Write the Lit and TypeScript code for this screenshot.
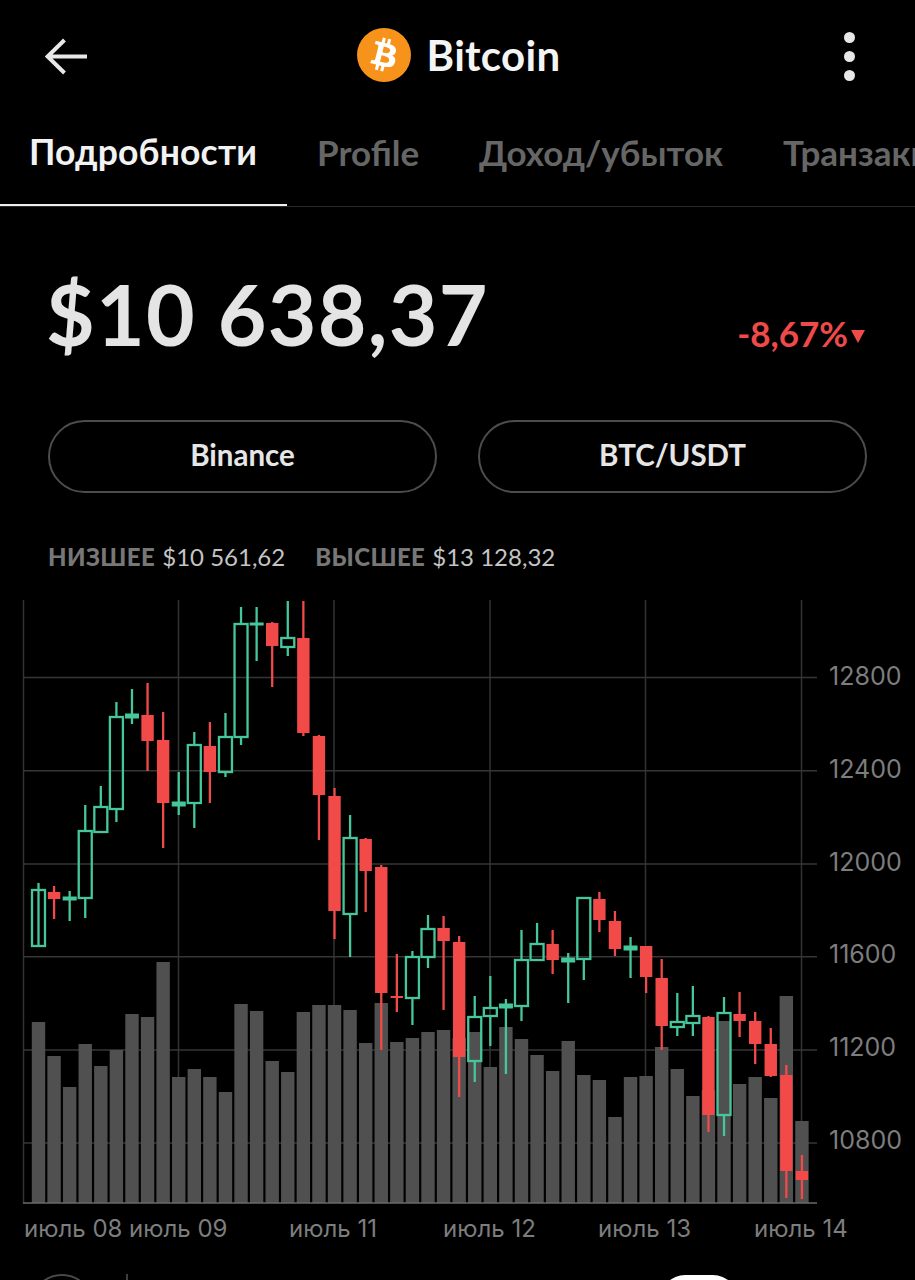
import { LitElement, html, css, svg } from "lit";
import { customElement } from "lit/decorators.js";

// [body-top, body-bottom, wick-top, wick-bottom, up?] in page pixels
const C: [number, number, number, number, number][] = [
  [890,946,883,890,1],[892,899,886,919,0],[897,900,891,921,1],[831,898,805,918,1],[807,832,786,832,1],
  [717,809,702,822,1],[714,718,689,724,1],[715,741,683,771,0],[740,803,712,848,0],[802,806,772,815,1],
  [745,803,732,828,1],[746,772,722,803,0],[737,772,713,777,1],[624,737,607,745,1],[623,625,607,661,1],
  [623,646,622,687,0],[638,647,601,656,1],[638,733,601,736,0],[736,795,735,840,0],[796,911,788,939,0],
  [838,914,815,957,1],[839,871,838,912,0],[867,993,865,1050,0],[996,998,954,1012,0],[957,998,951,1025,1],
  [929,957,915,968,1],[928,941,916,1010,0],[942,1057,936,1097,0],[1017,1061,996,1082,1],[1008,1016,976,1046,1],
  [1004,1008,999,1074,1],[960,1006,930,1021,1],[944,960,923,960,1],[944,960,930,974,0],[958,962,953,1003,1],
  [898,959,897,980,1],[899,920,892,932,0],[921,949,911,956,0],[946,950,937,978,1],[946,977,946,993,0],
  [978,1026,959,1050,0],[1022,1027,993,1036,1],[1016,1023,986,1036,1],[1017,1115,1016,1132,0],[1013,1115,997,1136,1],
  [1014,1021,992,1037,0],[1021,1044,1012,1064,0],[1044,1076,1028,1077,0],[1075,1171,1065,1198,0],[1171,1180,1155,1199,0],
];
const V = [1022,1056,1087,1044,1066,1050,1014,1017,962,1077,1069,1077,1092,1004,1011,1061,1072,1012,1005,1005,1010,1043,1003,1042,1038,1032,1030,1038,1032,1067,1027,1039,1055,1071,1041,1075,1080,1117,1077,1076,1047,1069,1096,1090,1021,1084,1077,1098,996,1121];
const VX = [23.5,178.5,334,490,645.5,801.5];
const HY: [number, string, number][] = [[677.5,"12800",685],[770.7,"12400",778],[864,"12000",871],[956.7,"11600",963],[1050,"11200",1056],[1143,"10800",1149]];
const XL: [number, string][] = [[24,"июль 08"],[129,"июль 09"],[289,"июль 11"],[443,"июль 12"],[598,"июль 13"],[754,"июль 14"]];
const cx = (i: number) => 38.5 + i * 15.58;

@customElement("app-root")
export class AppRoot extends LitElement {
  static styles = css`
    :host { display: block; width: 915px; height: 1280px; overflow: hidden; background: #000; font-family: Lato, "Open Sans", "Noto Sans", sans-serif; color: #e6e6e6; }
    .head { height: 112px; display: grid; grid-template-columns: 1fr auto 1fr; align-items: center; padding: 0 45px; box-sizing: border-box; }
    .back { display: block; width: 44px; height: 38px; }
    .brand { display: flex; align-items: center; gap: 16px; font-size: 42px; font-weight: 700; color: #f4f4f4; letter-spacing: .3px; line-height: 54px; margin-left: 2px; margin-top: -2px; }
    .brand svg { width: 54px; height: 54px; }
    .dots { justify-self: end; display: flex; flex-direction: column; gap: 8px; margin-right: 15px; }
    .dots i { width: 11px; height: 11px; border-radius: 50%; background: #e8e8e8; display: block; }
    .tabs { height: 95px; display: flex; border-bottom: 1px solid #2a2a2a; box-sizing: border-box; overflow: hidden; white-space: nowrap; font-size: 35px; font-weight: 700; color: #666; }
    .tab { padding: 0 30px; line-height: 80px; box-sizing: border-box; height: 95px; flex: none; }
    .tab.on { color: #f2f2f2; border-bottom: 3px solid #eee; font-size: 35.5px; letter-spacing: .15px; padding-left: 29px; }
    .quote { height: 214px; padding: 0 50px 0 46px; display: flex; align-items: flex-start; justify-content: space-between; box-sizing: border-box; }
    .price { font-size: 84px; letter-spacing: 1.3px; line-height: 98px; font-weight: 700; color: #e4e4e4; margin-top: 58px; }
    .chg { font-size: 35px; font-weight: 700; color: #ef4a4a; display: flex; align-items: center; gap: 3px; margin-top: 105px; }
    .chg svg { width: 14px; height: 14px; margin-top: 5px; }
    .pills { display: grid; grid-template-columns: 389px 389px; gap: 41px; padding: 0 48px; margin-top: -1px; }
    .pill { height: 73px; padding-bottom: 5px; border: 2px solid #4c4c4c; border-radius: 37px; box-sizing: border-box; display: flex; align-items: center; justify-content: center; font-size: 29.5px; font-weight: 700; color: #e6e6e6; }
    .stats { height: 98px; display: flex; align-items: center; gap: 30px; padding: 28px 48px 0; box-sizing: border-box; font-size: 24px; white-space: nowrap; }
    .stats b { color: #777; font-weight: 900; margin-right: 7px; letter-spacing: .4px; }
    .stats span { color: #c4c4c4; font-weight: 400; }
    .chart { display: block; width: 915px; height: 689px; }
    .chart text { font-family: Inter, sans-serif; font-size: 24px; fill: #7d7d7d; }
    .chart text.y { font-size: 25px; }
  `;

  render() {
    return html`
      <div class="head">
        <svg class="back" viewBox="0 0 44 38"><path d="M19.5 3 2.5 19.5 19.5 36M3 19.5H42" fill="none" stroke="#e8e8e8" stroke-width="4" /></svg>
        <div class="brand">
          <svg viewBox="0 0 64 64"><circle cx="32" cy="32" r="32" fill="#f7931a"/><path fill="#fff" d="m46.103 27.444c.637-4.258-2.605-6.547-7.038-8.074l1.438-5.768-3.511-.875-1.4 5.616c-.923-.23-1.871-.447-2.813-.662l1.41-5.653-3.509-.875-1.439 5.766c-.764-.174-1.514-.346-2.242-.527l.004-.018-4.842-1.209-.934 3.75s2.605.597 2.55.634c1.422.355 1.679 1.296 1.636 2.042l-1.638 6.571c.098.025.225.061.365.117-.117-.029-.242-.061-.371-.092l-2.296 9.205c-.174.432-.615 1.08-1.609.834.035.051-2.552-.637-2.552-.637l-1.743 4.019 4.569 1.139c.85.213 1.683.436 2.503.646l-1.453 5.834 3.507.875 1.439-5.772c.958.26 1.888.5 2.798.726l-1.434 5.745 3.511.875 1.453-5.823c5.987 1.133 10.489.676 12.384-4.739 1.527-4.36-.076-6.875-3.226-8.515 2.294-.529 4.022-2.038 4.483-5.155zm-8.022 11.249c-1.085 4.36-8.426 2.003-10.806 1.412l1.928-7.729c2.38.594 10.012 1.77 8.878 6.317zm1.086-11.312c-.99 3.966-7.1 1.951-9.082 1.457l1.748-7.01c1.982.494 8.365 1.416 7.334 5.553z"/></svg>
          Bitcoin
        </div>
        <div class="dots"><i></i><i></i><i></i></div>
      </div>
      <div class="tabs">
        <div class="tab on">Подробности</div><div class="tab">Profile</div><div class="tab">Доход/убыток</div><div class="tab">Транзакции</div>
      </div>
      <div class="quote">
        <div class="price">$10 638,37</div>
        <div class="chg">-8,67%<svg viewBox="0 0 14 14"><path d="M0 1H14L7 14Z" fill="#ef4a4a"/></svg></div>
      </div>
      <div class="pills"><div class="pill">Binance</div><div class="pill">BTC/USDT</div></div>
      <div class="stats">
        <div><b>НИЗШЕЕ</b><span>$10 561,62</span></div>
        <div><b>ВЫСШЕЕ</b><span>$13 128,32</span></div>
      </div>
      ${this.chart()}
    `;
  }

  private chart() {
    const red = "#f24949", green = "#46c79b";
    return html`<svg class="chart" viewBox="0 591 915 689">
      ${VX.map((x) => svg`<line x1=${x} x2=${x} y1="600" y2="1203" stroke="#333" stroke-width="1.5"/>`)}
      ${HY.map(([y]) => svg`<line x1="23" x2="817" y1=${y} y2=${y} stroke="#363636" stroke-width="1.5"/>`)}
      ${V.map((t, i) => svg`<rect x=${cx(i) - 6.7} y=${t} width="13.4" height=${1203 - t} fill="#505050"/>`)}
      <line x1="23" x2="817" y1="1203" y2="1203" stroke="#6a6a6a" stroke-width="1.5"/>
      ${C.map(([a, b, t, w, up], i) => {
        const x = cx(i), c = up ? green : red;
        const flat = b - a < 5;
        return up
          ? svg`<line x1=${x} x2=${x} y1=${t} y2=${a} stroke=${c} stroke-width="2.3"/><line x1=${x} x2=${x} y1=${b} y2=${w} stroke=${c} stroke-width="2.3"/><rect x=${x - 6.5} y=${a} width="13" height=${b - a} fill=${flat ? c : "none"} stroke=${c} stroke-width=${flat ? 1 : 2.3}/>`
          : svg`<line x1=${x} x2=${x} y1=${t} y2=${w} stroke=${c} stroke-width="2.3"/><rect x=${x - 6.2} y=${a} width="12.4" height=${b - a} fill=${c}/>`;
      })}
      ${HY.map(([, l, by]) => svg`<text class="y" x="829" y=${by}>${l}</text>`)}
      ${XL.map(([x, l]) => svg`<text x=${x} y="1237">${l}</text>`)}
      <circle cx="62" cy="1306" r="31" fill="none" stroke="#4a4a4a" stroke-width="2"/>
      <line x1="127" x2="127" y1="1274" y2="1280" stroke="#555" stroke-width="1.5"/>
      <rect x="660" y="1275" width="78" height="50" rx="25" fill="#fff"/>
    </svg>`;
  }
}
